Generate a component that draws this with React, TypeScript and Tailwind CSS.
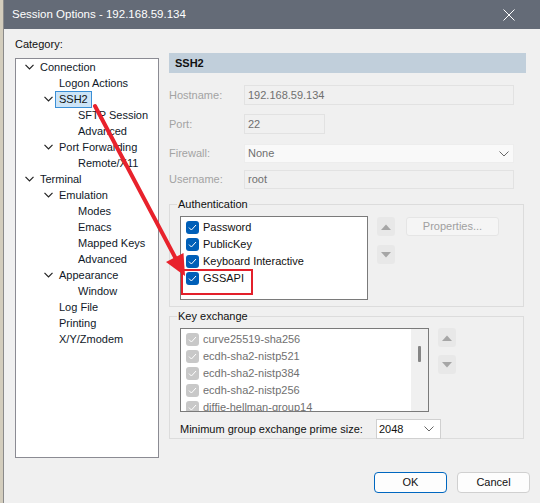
import React from 'react';

const font = { fontFamily: '"Liberation Sans", Arial, sans-serif' };

function Chevron() {
  return (
    <svg width="9" height="6" viewBox="0 0 9 6" className="shrink-0">
      <polyline points="0.5,0.8 4.5,4.8 8.5,0.8" fill="none" stroke="#222" strokeWidth="1.2" />
    </svg>
  );
}

type Node = { label: string; depth: number; open?: boolean; selected?: boolean };

const tree: Node[] = [
  { label: 'Connection', depth: 0, open: true },
  { label: 'Logon Actions', depth: 1 },
  { label: 'SSH2', depth: 1, open: true, selected: true },
  { label: 'SFTP Session', depth: 2 },
  { label: 'Advanced', depth: 2 },
  { label: 'Port Forwarding', depth: 1, open: true },
  { label: 'Remote/X11', depth: 2 },
  { label: 'Terminal', depth: 0, open: true },
  { label: 'Emulation', depth: 1, open: true },
  { label: 'Modes', depth: 2 },
  { label: 'Emacs', depth: 2 },
  { label: 'Mapped Keys', depth: 2 },
  { label: 'Advanced', depth: 2 },
  { label: 'Appearance', depth: 1, open: true },
  { label: 'Window', depth: 2 },
  { label: 'Log File', depth: 1 },
  { label: 'Printing', depth: 1 },
  { label: 'X/Y/Zmodem', depth: 1 },
];

const indent = ['pl-[9px]', 'pl-[28px]', 'pl-[47px]'];

function TreeRow({ n }: { n: Node }) {
  return (
    <div className={`flex items-center h-[16px] whitespace-nowrap ${indent[n.depth]}`}>
      <div className="w-[15px] shrink-0 flex items-center">{n.open && <Chevron />}</div>
      <span
        className={
          n.selected
            ? 'ml-[-4px] px-[3px] h-[17px] leading-[15px] border border-[#3b8fd6] bg-[#cce4f7] text-[#111]'
            : 'text-[#101828]'
        }
      >
        {n.label}
      </span>
    </div>
  );
}

function Check({ disabled }: { disabled?: boolean }) {
  return (
    <div
      className={`w-[13px] h-[13px] rounded-[3px] flex items-center justify-center shrink-0 ${
        disabled ? 'bg-[#c8c8c8]' : 'bg-[#005fb8]'
      }`}
    >
      <svg width="9" height="7" viewBox="0 0 9 7">
        <polyline points="1,3.6 3.4,6 8,1" fill="none" stroke="#fff" strokeWidth="1" />
      </svg>
    </div>
  );
}

function ArrowBtn({ up }: { up?: boolean }) {
  return (
    <div className="w-[18px] h-[19px] rounded-[3px] bg-[#e8e8e8] flex items-center justify-center">
      <svg width="10" height="6" viewBox="0 0 10 6">
        {up ? <polygon points="0,6 10,6 5,0.5" fill="#a6a6a6" /> : <polygon points="0,0 10,0 5,5.5" fill="#a6a6a6" />}
      </svg>
    </div>
  );
}

function SelChevron() {
  return (
    <svg width="10" height="6" viewBox="0 0 10 6">
      <polyline points="0.5,0.5 5,5 9.5,0.5" fill="none" stroke="#666" strokeWidth="1" />
    </svg>
  );
}

export default function App() {
  return (
    <div className="relative w-[540px] h-[503px] flex overflow-hidden text-[11px]" style={font}>
      <div className="w-[3px] bg-[#d3cdbd] border-r border-[#8a8a8a] box-content" />
      <div className="flex-1 flex flex-col bg-[#f0f0f0]">
        <div className="h-[29px] bg-[#646b77] flex items-center justify-between pl-[8px] pr-[25px] text-white text-[11.5px]">
          <span>Session Options - 192.168.59.134</span>
          <svg width="12" height="12" viewBox="0 0 12 12">
            <path d="M0.5 0.5 L11.5 11.5 M11.5 0.5 L0.5 11.5" stroke="#fff" strokeWidth="1" />
          </svg>
        </div>
        <div className="flex-1 flex pl-[11px]">
          <div className="w-[144px] flex flex-col">
            <div className="mt-[7px] h-[16px] leading-[16px] text-[#111]">Category:</div>
            <div className="mt-[6px] h-[400px] bg-white border border-[#8b8b93]">
              {tree.map((n, i) => (
                <TreeRow key={i} n={n} />
              ))}
            </div>
          </div>
          <div className="ml-[10px] w-[357px] flex flex-col pt-[24px]">
            <div className="h-[20px] bg-[#c1cfdb] flex items-center pl-[6px] font-bold text-[#111]">SSH2</div>
            <div className="mt-[12px] flex flex-col text-[#a3a3a3]">
              <div className="flex items-center h-[20px]">
                <span className="w-[75px]">Hostname:</span>
                <div className="w-[270px] h-[20px] border border-[#e2e2e2] flex items-center pl-[3px] text-[#6f6f6f]">192.168.59.134</div>
              </div>
              <div className="flex items-center h-[20px] mt-[9px]">
                <span className="w-[75px]">Port:</span>
                <div className="w-[81px] h-[20px] border border-[#e2e2e2] flex items-center pl-[3px] text-[#6f6f6f]">22</div>
              </div>
              <div className="flex items-center h-[19px] mt-[10px]">
                <span className="w-[75px]">Firewall:</span>
                <div className="w-[270px] h-[19px] bg-[#f9f9f9] border border-[#ededed] flex items-center justify-between pl-[3px] pr-[4px] text-[#6f6f6f]">
                  <span>None</span>
                  <SelChevron />
                </div>
              </div>
              <div className="flex items-center h-[19px] mt-[7px]">
                <span className="w-[75px]">Username:</span>
                <div className="w-[270px] h-[19px] border border-[#e2e2e2] flex items-center pl-[3px] text-[#6f6f6f]">root</div>
              </div>
            </div>

            <fieldset className="mt-[8px] w-[355px] h-[110px] border border-[#dcdcdc] px-[10px] pb-[6px]">
              <legend className="px-[1px] ml-[-3px] text-[#111] leading-[14px]">Authentication</legend>
              <div className="flex items-start mt-[5px]">
                <div className="w-[188px] h-[84px] bg-white border border-[#7a7a7a] pt-[2px] pl-[5px] text-[#111]">
                  {['Password', 'PublicKey', 'Keyboard Interactive', 'GSSAPI'].map((t) => (
                    <div key={t} className="flex items-center h-[17px] gap-[4px]">
                      <Check />
                      <span>{t}</span>
                    </div>
                  ))}
                </div>
                <div className="ml-[9px] flex flex-col gap-[9px] mt-[1px]">
                  <ArrowBtn up />
                  <ArrowBtn />
                </div>
                <div className="ml-[11px] mt-[1px] w-[93px] h-[19px] rounded-[3px] bg-[#f5f5f5] border border-[#e5e5e5] flex items-center justify-center text-[#a0a0a0]">
                  Properties...
                </div>
              </div>
            </fieldset>

            <fieldset className="mt-[2px] w-[355px] h-[130px] border border-[#dcdcdc] px-[10px]">
              <legend className="px-[1px] ml-[-3px] text-[#111] leading-[14px]">Key exchange</legend>
              <div className="flex items-start mt-[5px]">
                <div className="w-[249px] h-[84px] bg-white border border-[#7a7a7a] flex overflow-hidden">
                  <div className="flex-1 pl-[5px] pt-[2px] text-[#707070] whitespace-nowrap">
                    {['curve25519-sha256', 'ecdh-sha2-nistp521', 'ecdh-sha2-nistp384', 'ecdh-sha2-nistp256', 'diffie-hellman-group14'].map((t) => (
                      <div key={t} className="flex items-center h-[17px] gap-[4px]">
                        <Check disabled />
                        <span>{t}</span>
                      </div>
                    ))}
                  </div>
                  <div className="w-[17px] bg-[#f0f0f0] flex justify-center pt-[17px]">
                    <div className="w-[3px] h-[16px] bg-[#858585] rounded-[1px]" />
                  </div>
                </div>
                <div className="ml-[9px] flex flex-col gap-[8px]">
                  <ArrowBtn up />
                  <ArrowBtn />
                </div>
              </div>
              <div className="flex items-center mt-[7px] text-[#111] whitespace-nowrap">
                <span className="w-[196px]">Minimum group exchange prime size:</span>
                <div className="w-[65px] h-[20px] bg-white border border-[#d0d0d0] flex items-center justify-between pl-[2px] pr-[6px]">
                  <span>2048</span>
                  <SelChevron />
                </div>
              </div>
            </fieldset>

            <div className="mt-[33px] flex justify-end gap-[10px] mr-[-4px] text-[#111]">
              <div className="w-[73px] h-[21px] rounded-[4px] bg-[#fdfdfd] border border-[#0067c0] flex items-center justify-center">OK</div>
              <div className="w-[73px] h-[21px] rounded-[4px] bg-[#fdfdfd] border border-[#d0d0d0] flex items-center justify-center">Cancel</div>
            </div>
          </div>
        </div>
      </div>

      {/* annotation overlay */}
      <div className="absolute left-[181px] top-[269px] w-[72px] h-[26px] border-2 border-[#e3202b]" />
      <svg className="absolute left-0 top-0 pointer-events-none" width="540" height="503">
        <line x1="95" y1="106" x2="176" y2="259" stroke="#e8222c" strokeWidth="4" strokeLinecap="round" />
        <polygon points="185,276 183.5,253 166,262" fill="#e8222c" />
      </svg>
    </div>
  );
}
